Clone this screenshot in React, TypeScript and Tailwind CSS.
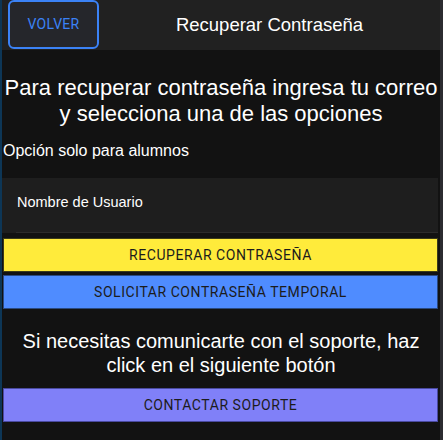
import React, { useState } from 'react';

const App: React.FC = () => {
    const [usuario, setUsuario] = useState('');

    return (
        <div className="flex w-full h-[440px] bg-[#121212] overflow-hidden" style={{ fontFamily: '"Liberation Sans", Arial, sans-serif' }}>
            <div className="w-[2px] shrink-0 bg-[#0d3656]" />
            <div className="flex-1 flex flex-col">
                <header className="h-[50px] flex items-center bg-[#212121]">
                    <button className="ml-[6px] h-[49px] w-[91px] self-start rounded-md border-2 border-[#3b82f6] bg-[#25262b] text-[#3b82f6] text-[14px] font-['Roboto'] tracking-[0.02em]">
                        VOLVER
                    </button>
                    <h1 className="flex-1 text-center text-white text-[18.5px]">Recuperar Contraseña</h1>
                </header>

                <p className="mt-[25px] text-center text-white text-[22px] leading-[26px]">
                    Para recuperar contraseña ingresa tu correo y selecciona una de las opciones
                </p>
                <p className="mt-[12px] pl-[1px] text-white text-[16px] leading-[24px]">Opción solo para alumnos</p>

                <div className="mt-[15px] mr-[2px] h-[55px] bg-[#1e1e1e] flex flex-col justify-center pb-[6px] relative">
                    <input
                        value={usuario}
                        onChange={(e) => setUsuario(e.target.value)}
                        placeholder="Nombre de Usuario"
                        className="bg-transparent outline-none pl-[15px] text-[14.5px] text-white placeholder:text-white"
                    />
                    <div className="absolute bottom-0 left-[14px] right-0 h-px bg-[#2c2c2c]" />
                </div>

                <div className="mt-[5px] ml-[1px] mr-[2px] flex flex-col gap-[3px] font-['Roboto']">
                    <button className="h-[34px] bg-[#ffeb3b] border border-[#3a3a1a] text-[#1c1c1c] text-[14px] tracking-[0.04em]">
                        RECUPERAR CONTRASEÑA
                    </button>
                    <button className="h-[34px] bg-[#4f8cff] border border-[#2a4a80] text-[#1c1c1c] text-[14px] tracking-[0.04em]">
                        SOLICITAR CONTRASEÑA TEMPORAL
                    </button>
                </div>

                <p className="mt-[20px] text-center text-white text-[20px] leading-[24px] px-5">
                    Si necesitas comunicarte con el soporte, haz click en el siguiente botón
                </p>

                <button className="mt-[11px] ml-[1px] mr-[2px] h-[34px] bg-[#8080f8] border border-[#4a4aa0] text-[#1c1c1c] text-[14px] tracking-[0.04em] font-['Roboto']">
                    CONTACTAR SOPORTE
                </button>
            </div>
            <div className="w-[3px] shrink-0 bg-[#2b2b30]" />
        </div>
    );
};

export default App;
